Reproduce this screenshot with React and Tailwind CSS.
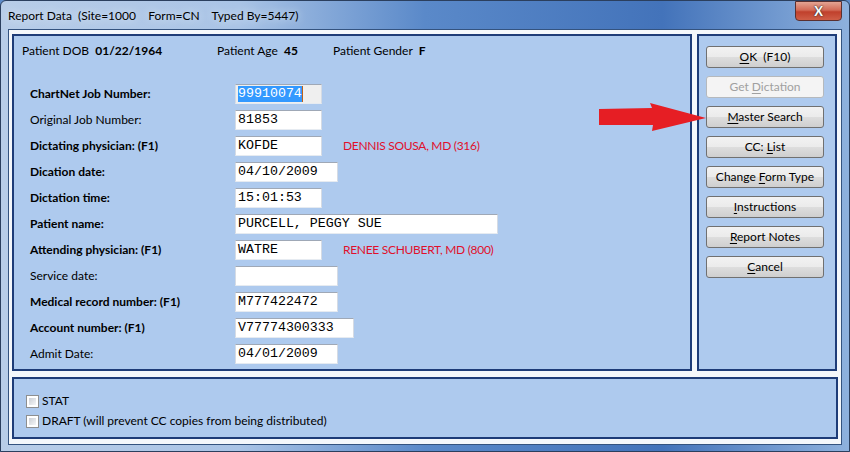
import React from 'react';

const ui = { fontFamily: 'Lato, "Noto Sans", sans-serif' };
const mono = { fontFamily: '"Liberation Mono", "Courier New", monospace' };

const rows = [
  { label: 'ChartNet Job Number:', bold: true, value: '99910074', w: 'w-[87px]', selected: true },
  { label: 'Original Job Number:', value: '81853', w: 'w-[87px]' },
  { label: 'Dictating physician: (F1)', bold: true, value: 'KOFDE', w: 'w-[87px]', note: 'DENNIS SOUSA, MD (316)' },
  { label: 'Dication date:', bold: true, value: '04/10/2009', w: 'w-[103px]' },
  { label: 'Dictation time:', bold: true, value: '15:01:53', w: 'w-[87px]' },
  { label: 'Patient name:', bold: true, value: 'PURCELL, PEGGY SUE', w: 'w-[263px]' },
  { label: 'Attending physician: (F1)', bold: true, value: 'WATRE', w: 'w-[87px]', note: 'RENEE SCHUBERT, MD (800)' },
  { label: 'Service date:', value: '', w: 'w-[103px]' },
  { label: 'Medical record number: (F1)', bold: true, value: 'M777422472', w: 'w-[103px]' },
  { label: 'Account number: (F1)', bold: true, value: 'V77774300333', w: 'w-[119px]' },
  { label: 'Admit Date:', value: '04/01/2009', w: 'w-[103px]' },
];

const buttons = [
  { pre: '', key: 'O', post: 'K  (F10)' },
  { pre: 'Get ', key: 'D', post: 'ictation', disabled: true },
  { pre: '', key: 'M', post: 'aster Search' },
  { pre: 'CC: ', key: 'L', post: 'ist' },
  { pre: 'Change ', key: 'F', post: 'orm Type' },
  { pre: '', key: 'I', post: 'nstructions' },
  { pre: '', key: 'R', post: 'eport Notes' },
  { pre: '', key: 'C', post: 'ancel' },
];

function Field({ row }) {
  return (
    <div className="flex items-center h-[20px]">
      <div className={`w-[205px] text-[12px] text-black ${row.bold ? 'font-bold' : ''}`}>{row.label}</div>
      <div
        className={`${row.w} h-[20px] flex items-center pl-[2px] border border-t-[#9fa8b6] border-x-[#d5dbe4] border-b-[#e6ebf1] ${row.selected ? 'bg-[#efefef]' : 'bg-white'}`}
        style={mono}
      >
        {row.selected ? (
          <>
            <span className="bg-[#3399ff] text-white text-[13.3px] leading-[16px]">{row.value}</span>
            <span className="w-[1px] h-[16px] bg-[#c0621a]" />
          </>
        ) : (
          <span className="text-[13.3px] text-black leading-[16px]">{row.value}</span>
        )}
      </div>
      {row.note && <div className="ml-[21px] text-[12px] tracking-[-0.3px] text-[#e0102c]">{row.note}</div>}
    </div>
  );
}

function Btn({ b }) {
  return (
    <div
      className={`w-[118px] h-[22px] rounded-[3px] border flex items-center justify-center text-[12px] ${
        b.disabled
          ? 'border-[#b5b9bd] bg-[#f4f4f4] text-[#a0a0a0]'
          : 'border-[#707070] bg-[linear-gradient(#f2f2f2_0%,#ebebeb_50%,#dddddd_51%,#cfcfcf_100%)] text-black'
      }`}
    >
      <span className="whitespace-pre">
        {b.pre}
        <span className="underline underline-offset-2">{b.key}</span>
        {b.post}
      </span>
    </div>
  );
}

function Check({ label }) {
  return (
    <div className="flex items-center h-[20px]">
      <div className="w-[13px] h-[13px] border border-[#8e8f8f] bg-white p-[2px]">
        <div className="w-full h-full bg-[linear-gradient(135deg,#cbcfd5,#f5f6f7)]" />
      </div>
      <span className="ml-[3px] text-[12px] text-black">{label}</span>
    </div>
  );
}

export default function App() {
  return (
    <div className="relative w-[850px] h-[452px] overflow-hidden bg-[#5d8bc9]" style={ui}>
      <div className="w-full h-full flex flex-col rounded-t-[6px] border border-[#2b3f5e] bg-[linear-gradient(90deg,#b8cde8_0%,#aac4e6_28%,#5a89c9_50%,#4373ba_78%,#8eb1dd_100%)]">
        {/* title bar */}
        <div className="h-[29px] flex items-center pl-[7px] pt-[2px] relative">
          <span className="text-[12px] text-black whitespace-pre [text-shadow:0_0_8px_#e8f0fa]">
            {'Report Data  (Site=1000    Form=CN    Typed By=5447)'}
          </span>
          <div className="absolute right-[7px] top-0 w-[47px] h-[20px] rounded-b-[4px] border border-[#5a3030] bg-[linear-gradient(#e3a493_0%,#d26a56_45%,#c0402c_55%,#cf5e47_100%)] flex items-center justify-center">
            <span className="text-white font-bold text-[13px] leading-none [text-shadow:0_0_1px_#333,0_0_2px_#333]">X</span>
          </div>
        </div>
        {/* client */}
        <div className="flex-1 px-[7px] pb-[6px]">
          <div className="h-full bg-[#f4f7fb] border border-[#34537f] pt-[4px] px-[3px] pb-[5px] flex flex-col gap-[6px]">
            <div className="flex gap-[5px] h-[337px]">
              {/* main panel */}
              <div className="w-[680px] h-full border-2 border-[#1e3c78] bg-[#aecaee] flex flex-col">
                <div className="flex items-center h-[14px] mt-[8px] pl-[8px] text-[12px] text-black">
                  <div className="w-[195px]">
                    Patient DOB&nbsp; <b>01/22/1964</b>
                  </div>
                  <div className="w-[116px]">
                    Patient Age&nbsp; <b>45</b>
                  </div>
                  <div>
                    Patient Gender&nbsp; <b>F</b>
                  </div>
                </div>
                <div className="flex flex-col gap-[6px] mt-[26px] pl-[16px]">
                  {rows.map((r) => (
                    <Field key={r.label} row={r} />
                  ))}
                </div>
              </div>
              {/* button panel */}
              <div className="w-[140px] h-full border-2 border-[#1e3c78] bg-[#aecaee] pt-[10px] pl-[7px] flex flex-col gap-[8px]">
                {buttons.map((b) => (
                  <Btn key={b.post} b={b} />
                ))}
              </div>
            </div>
            {/* bottom panel */}
            <div className="h-[62px] border-2 border-[#1e3c78] bg-[#aecaee] pt-[12px] pl-[12px] flex flex-col">
              <Check label="STAT" />
              <Check label="DRAFT (will prevent CC copies from being distributed)" />
            </div>
          </div>
        </div>
      </div>
      {/* red arrow */}
      <svg className="absolute left-[598px] top-[102px]" width="110" height="30" viewBox="0 0 110 30">
        <path d="M1 7 L54 6 L52 1 L108 16 L54 29 L55 23 L1 23 Z" fill="#e61e24" />
      </svg>
    </div>
  );
}
